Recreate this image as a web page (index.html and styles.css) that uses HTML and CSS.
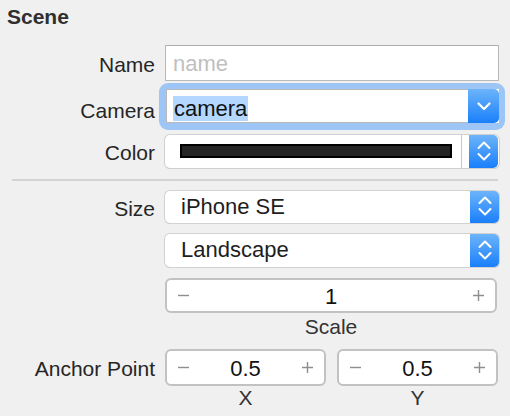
FILE: index.html
```html
<!DOCTYPE html>
<html>
<head>
<meta charset="utf-8">
<link rel="stylesheet" href="styles.css">
</head>
<body>
<div class="panel">
  <div class="title">Scene</div>

  <div class="row r-name">
    <div class="label">Name</div>
    <div class="ctl">
      <div class="textfield"><span class="placeholder">name</span></div>
    </div>
  </div>

  <div class="row r-camera">
    <div class="label label-camera">Camera</div>
    <div class="ctl">
      <div class="focus">
        <div class="combo">
          <div class="combo-text"><span class="sel">camera</span></div>
          <div class="blue-btn combo-btn">
            <svg width="14" height="9" viewBox="0 0 14 9"><path d="M1.5 1.5 L7 7 L12.5 1.5" fill="none" stroke="#fff" stroke-width="2.2" stroke-linecap="round" stroke-linejoin="round"/></svg>
          </div>
        </div>
      </div>
    </div>
  </div>

  <div class="row r-color">
    <div class="label">Color</div>
    <div class="ctl">
      <div class="colorctl">
        <div class="well-area"><span class="swatch"></span></div>
        <div class="well-gap"></div>
        <div class="blue-btn updown">
          <svg width="14" height="22" viewBox="0 0 14 22"><path d="M1.5 8 L7 2.5 L12.5 8 M1.5 14 L7 19.5 L12.5 14" fill="none" stroke="#fff" stroke-width="2" stroke-linecap="round" stroke-linejoin="round"/></svg>
        </div>
      </div>
    </div>
  </div>

  <div class="sep"></div>

  <div class="row r-size">
    <div class="label">Size</div>
    <div class="ctl">
      <div class="popup">
        <div class="popup-text">iPhone SE</div>
        <div class="blue-btn updown">
          <svg width="14" height="22" viewBox="0 0 14 22"><path d="M1.5 8 L7 2.5 L12.5 8 M1.5 14 L7 19.5 L12.5 14" fill="none" stroke="#fff" stroke-width="2" stroke-linecap="round" stroke-linejoin="round"/></svg>
        </div>
      </div>
    </div>
  </div>

  <div class="row r-orient">
    <div class="label"></div>
    <div class="ctl">
      <div class="popup">
        <div class="popup-text">Landscape</div>
        <div class="blue-btn updown">
          <svg width="14" height="22" viewBox="0 0 14 22"><path d="M1.5 8 L7 2.5 L12.5 8 M1.5 14 L7 19.5 L12.5 14" fill="none" stroke="#fff" stroke-width="2" stroke-linecap="round" stroke-linejoin="round"/></svg>
        </div>
      </div>
    </div>
  </div>

  <div class="row r-scale">
    <div class="label"></div>
    <div class="ctl">
      <div class="stepper stepper-wide">
        <svg class="minus" width="11" height="11" viewBox="0 0 11 11"><path d="M0 5.5 H11" stroke="#8e8e8e" stroke-width="1.4"/></svg>
        <span class="value">1</span>
        <svg class="plus" width="11" height="11" viewBox="0 0 11 11"><path d="M0 5.5 H11 M5.5 0 V11" stroke="#8e8e8e" stroke-width="1.4"/></svg>
      </div>
    </div>
  </div>

  <div class="row r-caption">
    <div class="label"></div>
    <div class="ctl caption">Scale</div>
  </div>

  <div class="row r-anchor">
    <div class="label">Anchor Point</div>
    <div class="ctl pair">
      <div class="stepper">
        <svg class="minus" width="11" height="11" viewBox="0 0 11 11"><path d="M0 5.5 H11" stroke="#8e8e8e" stroke-width="1.4"/></svg>
        <span class="value">0.5</span>
        <svg class="plus" width="11" height="11" viewBox="0 0 11 11"><path d="M0 5.5 H11 M5.5 0 V11" stroke="#8e8e8e" stroke-width="1.4"/></svg>
      </div>
      <div class="stepper">
        <svg class="minus" width="11" height="11" viewBox="0 0 11 11"><path d="M0 5.5 H11" stroke="#8e8e8e" stroke-width="1.4"/></svg>
        <span class="value">0.5</span>
        <svg class="plus" width="11" height="11" viewBox="0 0 11 11"><path d="M0 5.5 H11 M5.5 0 V11" stroke="#8e8e8e" stroke-width="1.4"/></svg>
      </div>
    </div>
  </div>

  <div class="row r-caption2">
    <div class="label"></div>
    <div class="ctl pair">
      <div class="caption half">X</div>
      <div class="caption half">Y</div>
    </div>
  </div>
</div>
</body>
</html>
```

FILE: styles.css
```css
html, body {
  margin: 0;
  padding: 0;
}
body {
  background: #f0f0f0;
  font-family: "Liberation Sans", Arial, sans-serif;
  color: #262626;
  width: 510px;
  height: 416px;
  overflow: hidden;
}
.panel {
  display: flex;
  flex-direction: column;
}
.title {
  font-weight: bold;
  font-size: 21px;
  line-height: 24px;
  padding: 5px 0 0 7px;
  color: #2f2f2f;
}
.row {
  display: flex;
  align-items: center;
}
.label {
  width: 155px;
  flex: none;
  text-align: right;
  font-size: 21px;
  line-height: 24px;
  padding-top: 3px;
  box-sizing: border-box;
}
.label-camera {
  padding-top: 9px;
}
.ctl {
  margin-left: 10px;
  width: 334px;
  flex: none;
}

/* rows spacing */
.r-name { margin-top: 16px; }
.r-camera { margin-top: 8px; }
.r-color { margin-top: 11px; }
.sep {
  margin: 11px 12px 0 12px;
  height: 2px;
  background: #d3d3d3;
  width: 486px;
}
.r-size { margin-top: 10px; }
.r-orient { margin-top: 11px; }
.r-scale { margin-top: 11px; }
.r-caption { margin-top: 2px; }
.r-anchor { margin-top: 10px; }
.r-caption2 { margin-top: 0px; }

/* text field */
.textfield {
  height: 36px;
  box-sizing: border-box;
  background: #fff;
  border: 1px solid #b9b9b9;
  border-top-color: #aeaeae;
  padding: 6px 0 0 7px;
  font-size: 22px;
  line-height: 24px;
}
.placeholder {
  color: #c0c0c0;
}

/* combo box with focus ring */
.focus {
  margin: -6px;
  padding: 6px 6px 7px 7px;
  background: #9dc5f5;
  border-radius: 9px;
}
.combo {
  display: flex;
  height: 34px;
  box-sizing: border-box;
  background: #fff;
}
.combo-text {
  flex: 1;
  border: 1px solid #b9b9b9;
  border-right: none;
  padding: 6px 0 0 6px;
}
.sel {
  display: inline-block;
  background: #b3d7ff;
  font-size: 22px;
  line-height: 25px;
  height: 25px;
  padding: 0 1px 0 1px;
  color: #111;
}
.blue-btn {
  flex: none;
  display: flex;
  align-items: center;
  justify-content: center;
  background: linear-gradient(#6cb4fa, #1a7ffb);
  border-radius: 0 5px 5px 0;
}
.combo-btn {
  width: 31px;
  border-radius: 0 5px 5px 0;
}
.updown {
  width: 29px;
}
.updown svg {
  margin-top: -2px;
}

/* color well */
.colorctl {
  display: flex;
  height: 33px;
  box-sizing: border-box;
  background: #fff;
  border-radius: 5px;
  box-shadow: 0 0 0 1px #d0d0d0, 0 1px 0 0 #b4b4b4;
}
.well-area {
  width: 297px;
  flex: none;
  border-right: 1px solid #c8c8c8;
  padding: 9px 0 0 15px;
  box-sizing: border-box;
}
.swatch {
  display: block;
  width: 272px;
  height: 14px;
  box-sizing: border-box;
  background: #252525;
  border: 2px solid #000;
}
.well-gap {
  width: 7px;
  flex: none;
}

/* popups */
.popup {
  display: flex;
  height: 32px;
  background: #fff;
  border-radius: 5px;
  box-shadow: 0 0 0 1px #d2d2d2, 0 1px 0 0 #b0b0b0;
}
.r-orient .popup {
  height: 33px;
}
.popup-text {
  flex: 1;
  padding: 4px 0 0 16px;
  font-size: 22px;
  line-height: 24px;
  color: #1e1e1e;
}

/* steppers */
.stepper {
  display: flex;
  align-items: center;
  justify-content: space-between;
  height: 35px;
  box-sizing: border-box;
  background: #fff;
  border: 2px solid #c2c2c2;
  border-radius: 6px;
  padding: 0 11px 0 11px;
  width: 161px;
}
.stepper-wide {
  width: 332px;
}
.r-anchor .stepper {
  height: 37px;
}
.value {
  font-size: 22px;
  line-height: 24px;
  padding-top: 3px;
  color: #111;
}
.pair {
  display: flex;
  gap: 11px;
}
.caption {
  font-size: 21px;
  line-height: 24px;
  text-align: center;
  color: #333;
  width: 332px;
}
.caption.half {
  width: 161px;
}
```
